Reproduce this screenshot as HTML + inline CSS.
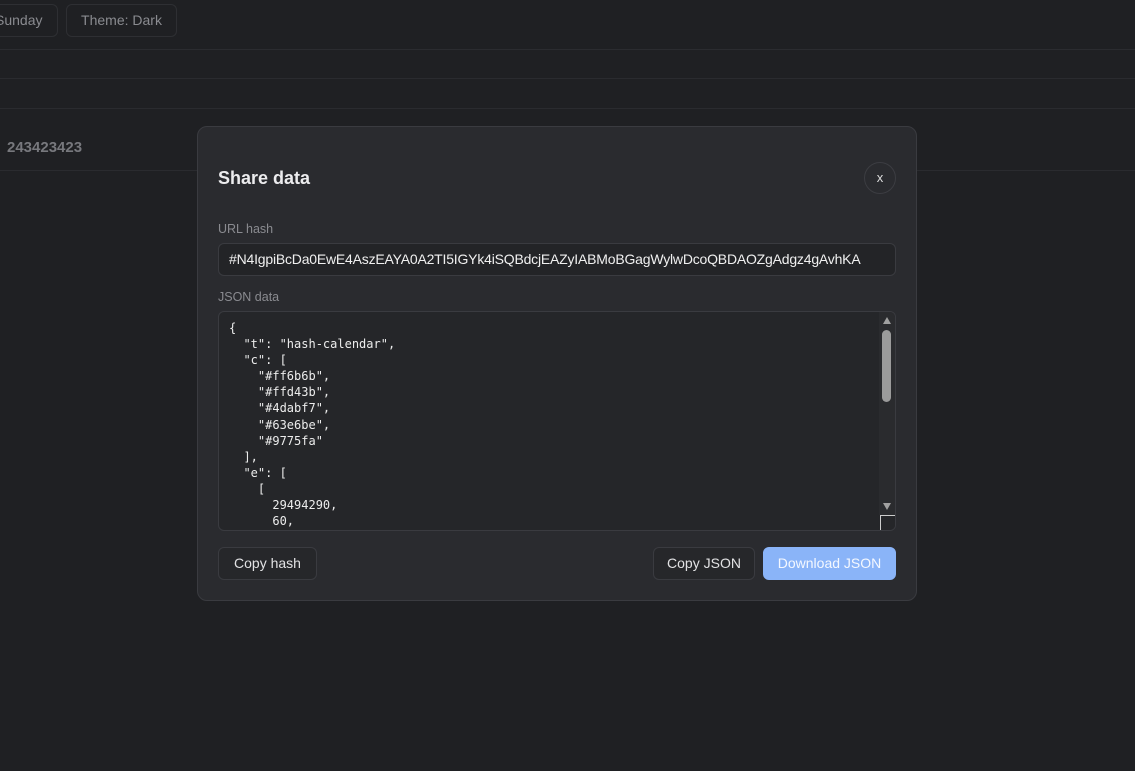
<!DOCTYPE html>
<html><head><style>
*{box-sizing:border-box;margin:0;padding:0}
body{width:1135px;height:771px;background:#1f2023;font-family:"Liberation Sans",sans-serif;position:relative;overflow:hidden;color:#e6e6e6}
.top{position:absolute;left:0;top:0;width:1135px;height:50px;border-bottom:1px solid #2b2c30}
.chip{position:absolute;top:4px;height:33px;border:1px solid #2e2f33;border-radius:6px;color:#8a8b90;font-size:14px;line-height:31px;padding:0 14px}
.hl{position:absolute;left:0;width:1135px;height:1px;background:#2a2b2f}
.num{position:absolute;left:7px;top:139px;font-size:15px;font-weight:bold;color:#77787d}
.modal{position:absolute;left:197px;top:126px;width:720px;height:475px;background:#2a2b2f;border:1px solid #3a3b40;border-radius:10px}
.title{position:absolute;left:20px;top:41px;font-size:18px;font-weight:bold;color:#ececee}
.close{position:absolute;left:666px;top:35px;width:32px;height:32px;border:1px solid #3c3d42;border-radius:50%;text-align:center;line-height:29px;font-size:13px;color:#ddd}
.lbl{position:absolute;left:20px;font-size:12.5px;color:#8a8b90}
.inp{position:absolute;left:20px;top:116px;width:678px;height:33px;background:#232427;border:1px solid #3a3b40;border-radius:6px;font-size:14px;letter-spacing:-0.2px;line-height:31px;padding-left:10px;color:#f0f0f0;white-space:nowrap;overflow:hidden}
.ta{position:absolute;left:20px;top:184px;width:678px;height:220px;background:#252629;border:1px solid #3a3b40;border-radius:6px;overflow:hidden}
pre{position:absolute;left:10px;top:8px;font-family:"DejaVu Sans Mono","Liberation Mono",monospace;font-size:12px;line-height:16.1px;color:#ececec}
.sb{position:absolute;right:0;top:0;width:16px;height:203px;background:#2a2b2e}
.btn{position:absolute;top:420px;height:33px;border:1px solid #3a3b40;border-radius:6px;font-size:14px;line-height:31px;text-align:center;color:#e2e2e4;background:#26272a}
</style></head><body>
<div class="top"></div>
<div class="chip" style="left:-20px;width:78px">Sunday</div>
<div class="chip" style="left:66px;width:111px;padding:0;text-align:center">Theme: Dark</div>
<div class="hl" style="top:78px"></div>
<div class="hl" style="top:108px"></div>
<div class="hl" style="top:170px"></div>
<div class="num">243423423</div>
<div class="modal">
<div class="title">Share data</div>
<div class="close">x</div>
<div class="lbl" style="top:95px">URL hash</div>
<div class="inp">#N4IgpiBcDa0EwE4AszEAYA0A2TI5IGYk4iSQBdcjEAZyIABMoBGagWylwDcoQBDAOZgAdgz4gAvhKA</div>
<div class="lbl" style="top:163px">JSON data</div>
<div class="ta">
<pre>{
  "t": "hash-calendar",
  "c": [
    "#ff6b6b",
    "#ffd43b",
    "#4dabf7",
    "#63e6be",
    "#9775fa"
  ],
  "e": [
    [
      29494290,
      60,</pre>
<div class="sb">
<div style="position:absolute;left:4px;top:5px;width:0;height:0;border-left:4px solid transparent;border-right:4px solid transparent;border-bottom:7px solid #a0a0a0"></div>
<div style="position:absolute;left:3px;top:18px;width:9px;height:72px;background:#9b9b9b;border-radius:5px"></div>
<div style="position:absolute;left:4px;top:191px;width:0;height:0;border-left:4px solid transparent;border-right:4px solid transparent;border-top:7px solid #a0a0a0"></div>
</div>
<div style="position:absolute;right:0;bottom:0;width:15px;height:15px;border:1px solid #ccc;border-right:none;border-bottom:none;background:#252629"></div>
</div>
<div class="btn" style="left:20px;width:99px">Copy hash</div>
<div class="btn" style="left:455px;width:102px">Copy JSON</div>
<div class="btn" style="left:565px;width:133px;background:#8ab4f8;border-color:#8ab4f8;color:#f4f8ff">Download JSON</div>
</div>
</body></html>
